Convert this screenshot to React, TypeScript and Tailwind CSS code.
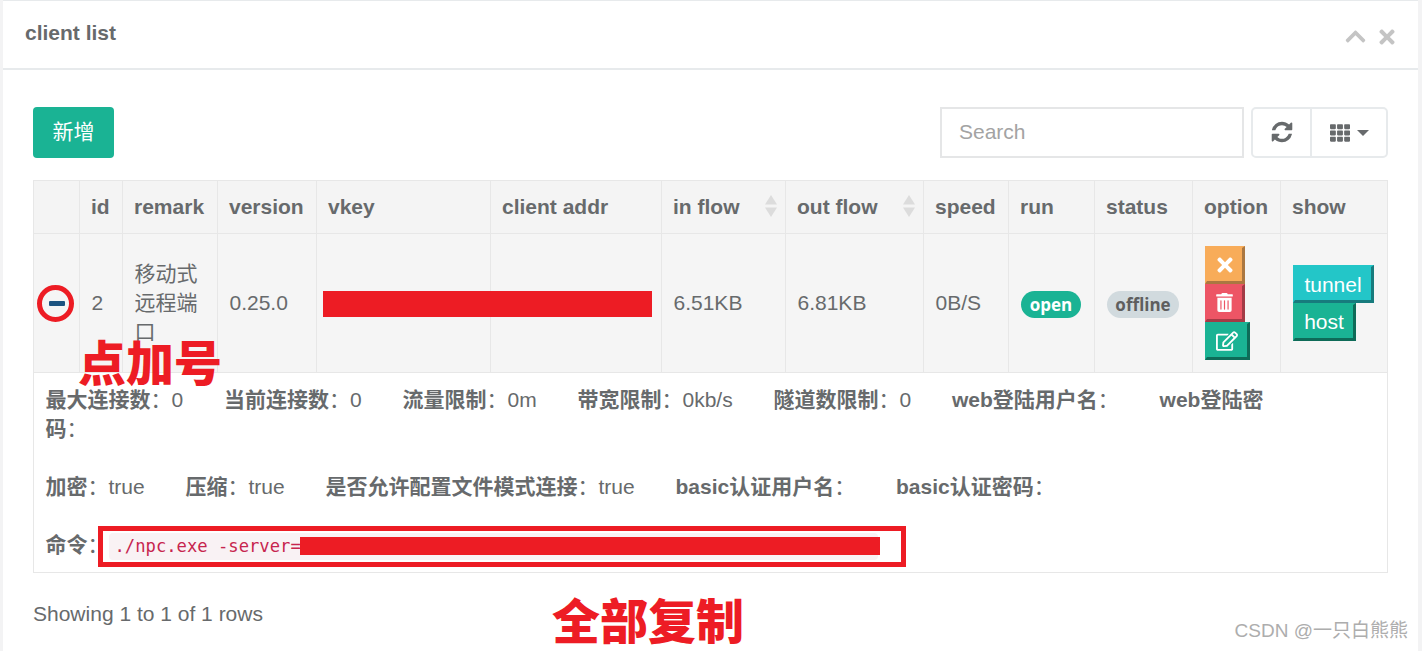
import React from "react";
import { FaChevronUp, FaTimes, FaTh, FaTrashAlt, FaRegEdit } from "react-icons/fa";

const sans = "font-['Liberation_Sans','Noto_Sans_CJK_SC',sans-serif]";

function Refresh() {
  return (
    <svg width="24" height="24" viewBox="0 0 1792 1792" fill="currentColor">
      <path d="M1639 1056q0 5-1 7-64 268-268 434.5t-478 166.5q-146 0-282.5-55t-243.5-157l-129 129q-19 19-45 19t-45-19-19-45v-448q0-26 19-45t45-19h448q26 0 45 19t19 45-19 45l-137 137q71 66 161 102t187 36q134 0 250-65t186-179q11-17 53-117 8-23 30-23h192q13 0 22.5 9.5t9.5 22.5zm25-800v448q0 26-19 45t-45 19h-448q-26 0-45-19t-19-45 19-45l138-138q-148-137-349-137-134 0-250 65t-186 179q-11 17-53 117-8 23-30 23h-199q-13 0-22.5-9.5t-9.5-22.5v-7q65-268 270-434.5t480-166.5q146 0 284 55.5t245 156.5l130-129q19-19 45-19t45 19 19 45z" />
    </svg>
  );
}

function Sort() {
  return (
    <svg width="12" height="22" viewBox="0 0 12 22" className="shrink-0">
      <path d="M6 0L12 9.500H0Z" fill="#dcdcdc" />
      <path d="M6 22L12 12.500H0Z" fill="#dcdcdc" />
    </svg>
  );
}

function Bevel({ base, dark, className, children }: { base: string; dark: string; className: string; children: React.ReactNode }) {
  return (
    <div
      className={`flex items-center justify-center border-solid border-t-2 border-l-2 border-r-[3px] border-b-[3px] ${className}`}
      style={{ backgroundColor: base, borderTopColor: base, borderLeftColor: base, borderRightColor: dark, borderBottomColor: dark }}
    >
      {children}
    </div>
  );
}

const cols = [46, 43, 95, 99, 174, 171, 124, 138, 85, 86, 98, 88, 107];

const th = "border border-[#e7e7e7] pl-[11px] pr-[8px] pb-[2px] text-left font-bold align-middle";
const td = "border border-[#e7e7e7] pl-[11.500px] pr-[8px] pb-[2px] align-middle font-normal";
const tdFlat = "border border-[#e7e7e7] px-[12px] align-middle font-normal";

function Item({ label, value }: { label: string; value: string }) {
  return (
    <>
      <b>{label}</b>
      <span>：</span>
      {value}
      <span className="inline-block w-[40.800px]" />
    </>
  );
}

export default function App() {
  return (
    <div className={`relative w-[1422px] h-[651px] overflow-hidden bg-[#f3f3f4] pl-[3px] pr-[4px] text-[#676a6c] text-[21px] leading-[29px] ${sans}`}>
      <div className="h-full bg-white border-t border-[#e7eaec]">
        <div className="h-[69px] border-b-2 border-[#e7eaec] flex items-start justify-between pl-[22px] pr-[20px] pt-[17px]">
          <h5 className="font-bold text-[21px] leading-[29px]">client list</h5>
          <div className="flex items-center gap-[9px] pt-[7px] text-[#c4c4c4]">
            <FaChevronUp size={23} />
            <FaTimes size={22} />
          </div>
        </div>

        <div className="pt-[37px] pl-[30px] pr-[30px]">
          <div className="flex items-stretch justify-between h-[51px]">
            <button className="w-[81px] bg-[#1ab394] text-white rounded-[4px] pb-[2px]">新增</button>
            <div className="flex items-stretch gap-[7px]">
              <input
                readOnly
                placeholder="Search"
                className="w-[304px] border-2 border-[#e5e6e7] pl-[17px] pr-[18px] pb-[2px] outline-none placeholder:text-[#a3a3a3]"
              />
              <div className="flex border-2 border-[#e7eaec] rounded-[5px]">
                <div className="w-[59px] flex items-center justify-center border-r-2 border-[#e7eaec] pb-[2px]">
                  <Refresh />
                </div>
                <div className="w-[74px] flex items-center justify-center gap-[7px]">
                  <FaTh size={20} />
                  <span className="w-0 h-0 border-x-[6px] border-x-transparent border-t-[6px] border-t-[#676a6c]" />
                </div>
              </div>
            </div>
          </div>

          <table className="mt-[22px] w-[1355px] table-fixed border-collapse">
            <colgroup>
              {cols.map((w, i) => (
                <col key={i} style={{ width: w }} />
              ))}
            </colgroup>
            <thead>
              <tr className="h-[53px] bg-[#f4f4f4]">
                <th className={th} />
                <th className={th}>id</th>
                <th className={th}>remark</th>
                <th className={th}>version</th>
                <th className={th}>vkey</th>
                <th className={th}>client addr</th>
                <th className={th}>
                  <div className="flex items-center justify-between">in flow<Sort /></div>
                </th>
                <th className={th}>
                  <div className="flex items-center justify-between">out flow<Sort /></div>
                </th>
                <th className={th}>speed</th>
                <th className={th}>run</th>
                <th className={th}>status</th>
                <th className={th}>option</th>
                <th className={th}>show</th>
              </tr>
            </thead>
            <tbody>
              <tr className="h-[139px] bg-[#f5f5f5]">
                <td className={tdFlat}>
                  <div className="w-[16px] h-[5px] bg-[#1c5380] ml-[3px] rounded-[1px]" />
                </td>
                <td className={td}>2</td>
                <td className={td}>移动式远程端口</td>
                <td className={td}>0.25.0</td>
                <td className={td}></td>
                <td className={td}></td>
                <td className={td}>6.51KB</td>
                <td className={td}>6.81KB</td>
                <td className={td}>0B/S</td>
                <td className={tdFlat}>
                  <span className="inline-flex items-center justify-center w-[60px] h-[27px] rounded-full bg-[#1ab394] text-white font-bold text-[17px] font-['Open_Sans',sans-serif]">open</span>
                </td>
                <td className={tdFlat}>
                  <span className="inline-flex items-center justify-center w-[72px] h-[27px] rounded-full bg-[#d1dade] text-[#5e5e5e] font-bold text-[17px] font-['Open_Sans',sans-serif]">offline</span>
                </td>
                <td className={tdFlat}>
                  <div className="flex flex-col items-start">
                    <Bevel base="#f8ac59" dark="#ab7741" className="w-[40px] h-[38px] text-white"><FaTimes size={22} /></Bevel>
                    <Bevel base="#ed5565" dark="#a33b46" className="w-[40px] h-[38px] text-white"><FaTrashAlt size={19} /></Bevel>
                    <Bevel base="#1ab394" dark="#0e6b58" className="w-[45px] h-[38px] text-white"><FaRegEdit size={22} /></Bevel>
                  </div>
                </td>
                <td className={tdFlat}>
                  <div className="flex flex-col items-start">
                    <Bevel base="#23c6c8" dark="#177b7d" className="w-[81px] h-[38px] text-white pt-[2px]">tunnel</Bevel>
                    <Bevel base="#1ab394" dark="#0e6b58" className="w-[63px] h-[38px] text-white">host</Bevel>
                  </div>
                </td>
              </tr>
              <tr>
                <td colSpan={13} className="border border-[#e7e7e7] pl-[11.500px] pr-[12px] pt-[12px] pb-[12px]">
                  <Item label="最大连接数" value="0" />
                  <Item label="当前连接数" value="0" />
                  <Item label="流量限制" value="0m" />
                  <Item label="带宽限制" value="0kb/s" />
                  <Item label="隧道数限制" value="0" />
                  <Item label="web登陆用户名" value="" />
                  <b>web登陆密</b>
                  <br />
                  <b>码</b>：
                  <br />
                  <br />
                  <Item label="加密" value="true" />
                  <Item label="压缩" value="true" />
                  <Item label="是否允许配置文件模式连接" value="true" />
                  <Item label="basic认证用户名" value="" />
                  <b>basic认证密码</b>：
                  <br />
                  <br />
                  <b>命令</b>：
                  <code className="inline-block w-[769px] h-[27px] leading-[27px] align-middle rounded-[4px] bg-[#f9f2f4] pl-[6px] text-[#c7254e] text-[17.200px] font-['DejaVu_Sans_Mono',monospace]">./npc.exe -server=</code>
                </td>
              </tr>
            </tbody>
          </table>

          <p className="mt-[26px]">Showing 1 to 1 of 1 rows</p>
        </div>
      </div>

      {/* annotations drawn over the screenshot */}
      <div className="absolute left-[37px] top-[285px] w-[37px] h-[37px] rounded-full border-[5px] border-[#ed1c24]" />
      <div className="absolute left-[323px] top-[291px] w-[329px] h-[26px] bg-[#ed1c24]" />
      <div className="absolute left-[98px] top-[526px] w-[808px] h-[41px] border-[5px] border-[#ed1c24]" />
      <div className="absolute left-[300px] top-[537px] w-[580px] h-[18px] bg-[#ed1c24]" />
      <div className="absolute left-[78px] top-[328px] text-[#ed1c24] font-black text-[48px] leading-[64px] font-['Noto_Sans_CJK_SC',sans-serif]">点加号</div>
      <div className="absolute left-[552px] top-[590px] text-[#ed1c24] font-black text-[48px] leading-[56px] font-['Noto_Sans_CJK_SC',sans-serif]">全部复制</div>
      <div className="absolute right-[14px] top-[617px] text-[#adadad] text-[19px] leading-[28px]">CSDN @一只白熊熊</div>
    </div>
  );
}
